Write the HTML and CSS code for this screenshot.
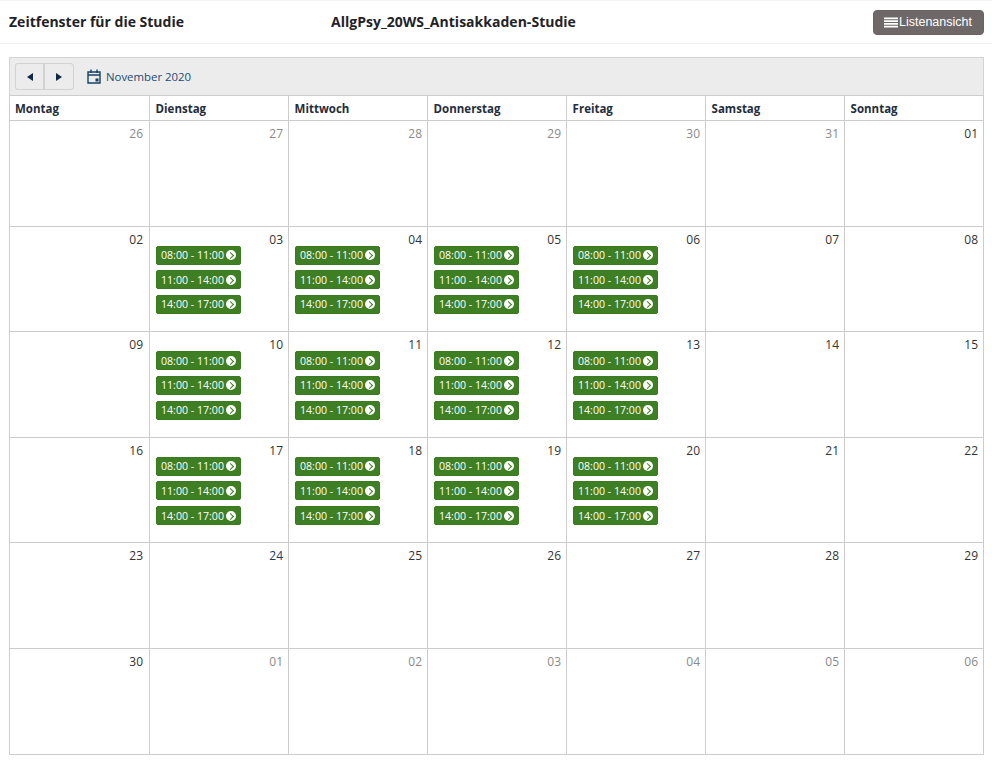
FILE: index.html
```html
<!DOCTYPE html>
<html lang="de">
<head>
<meta charset="utf-8">
<title>Zeitfenster für die Studie</title>
<link rel="stylesheet" href="styles.css">
</head>
<body>
<header class="topbar">
  <h1 class="title">Zeitfenster für die Studie</h1>
  <h2 class="study">AllgPsy_20WS_Antisakkaden-Studie</h2>
  <button class="list-btn" type="button">
    <svg class="list-icon" viewBox="0 0 14 11" width="14" height="11"><path d="M0 .5h14v1.800H0zM0 3.300h14v1.700H0zM0 6h14v1.700H0zM0 8.700h14v1.800H0z" fill="#fff"/></svg>
    <span>Listenansicht</span>
  </button>
</header>
<main class="calendar">
  <div class="toolbar">
    <div class="nav-group">
      <button class="nav-btn" type="button" aria-label="Zurück"><svg viewBox="0 0 6 8" width="6" height="8"><path d="M6 0v8L0 4z" fill="#10294a"/></svg></button>
      <button class="nav-btn" type="button" aria-label="Weiter"><svg viewBox="0 0 6 8" width="6" height="8"><path d="M0 0v8l6-4z" fill="#10294a"/></svg></button>
    </div>
    <svg class="cal-icon" viewBox="0 0 14 15" width="14" height="15"><path d="M1 3h12v11H1zM1 6h12M4 .5v3.500M10 .5v3.500" fill="none" stroke="#164066" stroke-width="1.400"/><rect x="8.500" y="9.500" width="3" height="3" fill="#164066"/></svg>
    <span class="month">November 2020</span>
  </div>
  <div class="grid" id="grid">
    <div class="head">Montag</div><div class="head">Dienstag</div><div class="head">Mittwoch</div><div class="head">Donnerstag</div><div class="head">Freitag</div><div class="head">Samstag</div><div class="head">Sonntag</div>

    <div class="day out"><span class="num">26</span></div><div class="day out"><span class="num">27</span></div><div class="day out"><span class="num">28</span></div><div class="day out"><span class="num">29</span></div><div class="day out"><span class="num">30</span></div><div class="day out"><span class="num">31</span></div><div class="day"><span class="num">01</span></div>

    <div class="day"><span class="num">02</span></div>
    <div class="day"><span class="num">03</span><a class="slot">08:00 - 11:00<i class="go"></i></a><a class="slot">11:00 - 14:00<i class="go"></i></a><a class="slot">14:00 - 17:00<i class="go"></i></a></div>
    <div class="day"><span class="num">04</span><a class="slot">08:00 - 11:00<i class="go"></i></a><a class="slot">11:00 - 14:00<i class="go"></i></a><a class="slot">14:00 - 17:00<i class="go"></i></a></div>
    <div class="day"><span class="num">05</span><a class="slot">08:00 - 11:00<i class="go"></i></a><a class="slot">11:00 - 14:00<i class="go"></i></a><a class="slot">14:00 - 17:00<i class="go"></i></a></div>
    <div class="day"><span class="num">06</span><a class="slot">08:00 - 11:00<i class="go"></i></a><a class="slot">11:00 - 14:00<i class="go"></i></a><a class="slot">14:00 - 17:00<i class="go"></i></a></div>
    <div class="day"><span class="num">07</span></div><div class="day"><span class="num">08</span></div>

    <div class="day"><span class="num">09</span></div>
    <div class="day"><span class="num">10</span><a class="slot">08:00 - 11:00<i class="go"></i></a><a class="slot">11:00 - 14:00<i class="go"></i></a><a class="slot">14:00 - 17:00<i class="go"></i></a></div>
    <div class="day"><span class="num">11</span><a class="slot">08:00 - 11:00<i class="go"></i></a><a class="slot">11:00 - 14:00<i class="go"></i></a><a class="slot">14:00 - 17:00<i class="go"></i></a></div>
    <div class="day"><span class="num">12</span><a class="slot">08:00 - 11:00<i class="go"></i></a><a class="slot">11:00 - 14:00<i class="go"></i></a><a class="slot">14:00 - 17:00<i class="go"></i></a></div>
    <div class="day"><span class="num">13</span><a class="slot">08:00 - 11:00<i class="go"></i></a><a class="slot">11:00 - 14:00<i class="go"></i></a><a class="slot">14:00 - 17:00<i class="go"></i></a></div>
    <div class="day"><span class="num">14</span></div><div class="day"><span class="num">15</span></div>

    <div class="day"><span class="num">16</span></div>
    <div class="day"><span class="num">17</span><a class="slot">08:00 - 11:00<i class="go"></i></a><a class="slot">11:00 - 14:00<i class="go"></i></a><a class="slot">14:00 - 17:00<i class="go"></i></a></div>
    <div class="day"><span class="num">18</span><a class="slot">08:00 - 11:00<i class="go"></i></a><a class="slot">11:00 - 14:00<i class="go"></i></a><a class="slot">14:00 - 17:00<i class="go"></i></a></div>
    <div class="day"><span class="num">19</span><a class="slot">08:00 - 11:00<i class="go"></i></a><a class="slot">11:00 - 14:00<i class="go"></i></a><a class="slot">14:00 - 17:00<i class="go"></i></a></div>
    <div class="day"><span class="num">20</span><a class="slot">08:00 - 11:00<i class="go"></i></a><a class="slot">11:00 - 14:00<i class="go"></i></a><a class="slot">14:00 - 17:00<i class="go"></i></a></div>
    <div class="day"><span class="num">21</span></div><div class="day"><span class="num">22</span></div>

    <div class="day"><span class="num">23</span></div><div class="day today"><span class="num">24</span></div><div class="day"><span class="num">25</span></div><div class="day"><span class="num">26</span></div><div class="day"><span class="num">27</span></div><div class="day"><span class="num">28</span></div><div class="day"><span class="num">29</span></div>

    <div class="day"><span class="num">30</span></div><div class="day out"><span class="num">01</span></div><div class="day out"><span class="num">02</span></div><div class="day out"><span class="num">03</span></div><div class="day out"><span class="num">04</span></div><div class="day out"><span class="num">05</span></div><div class="day out"><span class="num">06</span></div>
  </div>
</main>
</body>
</html>
```
FILE: styles.css
```css
* { box-sizing: border-box; }
html, body { margin: 0; padding: 0; background: #fff; }
body {
  width: 992px;
  height: 764px;
  overflow: hidden;
  font-family: "Open Sans", sans-serif;
  font-size: 12px;
  color: #222;
}
.topbar {
  height: 44px;
  border-top: 1px solid #f4f4f6;
  border-bottom: 1px solid #f0f0f0;
  display: flex;
  align-items: center;
  padding: 0 8px 2px 9px;
}
.title, .study {
  margin: 0;
  font-size: 14px;
  font-weight: 700;
  color: #1f2328;
  white-space: nowrap;
}
.title { width: 322px; }
.study { flex: 1; letter-spacing: .02px; }
.list-btn {
  width: 111px;
  height: 25px;
  margin-top: 2px;
  border: 1px solid #6a6363;
  border-radius: 4px;
  background: #6f6868;
  color: #fff;
  font: 12.5px/1 "Liberation Sans", sans-serif;
  display: flex;
  align-items: center;
  gap: 1px;
  padding: 0 0 0 10px;
}
.list-icon { display: block; }
.calendar {
  margin: 13px 8px 0 9px;
}
.toolbar {
  height: 38px;
  background: #ececec;
  border: 1px solid #d3d3d3;
  border-bottom: 0;
  display: flex;
  align-items: center;
  padding: 0 5px;
}
.nav-group { display: flex; margin-right: 13px; }
.nav-btn {
  width: 30px;
  height: 27px;
  background: #ececec;
  border: 1px solid #d2d2d2;
  padding: 0;
  display: flex;
  align-items: center;
  justify-content: center;
}
.nav-btn:first-child { border-radius: 3px 0 0 3px; border-right-width: 2px; }
.nav-btn:last-child { border-left: 0; border-radius: 0 4px 4px 0; width: 29px; }
.cal-icon { margin-right: 5px; }
.month { font-size: 11.4px; color: #1d4a75; }
.grid {
  display: grid;
  grid-template-columns: 140px repeat(6, 139px);
  grid-template-rows: 25px repeat(6, 105.6px);
  width: 975px;
  border-left: 1px solid #ccc;
  border-top: 1px solid #ccc;
}
.head, .day {
  border-right: 1px solid #ccc;
  border-bottom: 1px solid #ccc;
}
.head {
  font-weight: 700;
  font-size: 11.5px;
  line-height: 25px;
  padding-left: 5.6px;
  color: #1f2d3d;
}
.head:first-child { padding-left: 5px; }
.day {
  display: flex;
  flex-direction: column;
  align-items: flex-start;
  padding: 5px 5px 0 6px;
  min-width: 0;
}
.day:nth-child(7n+1) { padding-right: 6px; }
.num {
  align-self: flex-end;
  font-size: 12px;
  line-height: 15px;
  margin-bottom: -1px;
  color: #333;
}
.out .num { color: #8a8a8a; }
.today .num { color: #1d3a6c; }
.slot {
  width: 85px;
  height: 19px;
  margin-bottom: 5.67px;
  background: #3f7f24;
  border: 1px solid #3b7a21;
  border-radius: 2px;
  color: #fff;
  font-size: 10.6px;
  line-height: 16px;
  padding-left: 4px;
  display: flex;
  align-items: center;
  white-space: nowrap;
}
.go {
  width: 10px;
  height: 10px;
  border-radius: 50%;
  margin-left: 2px;
  background: #fff;
  position: relative;
  flex: none;
}
.go::after {
  content: "";
  position: absolute;
  left: 2px;
  top: 3px;
  width: 4px;
  height: 4px;
  border-top: 1.5px solid #3f7f24;
  border-right: 1.5px solid #3f7f24;
  transform: rotate(45deg);
}
```
